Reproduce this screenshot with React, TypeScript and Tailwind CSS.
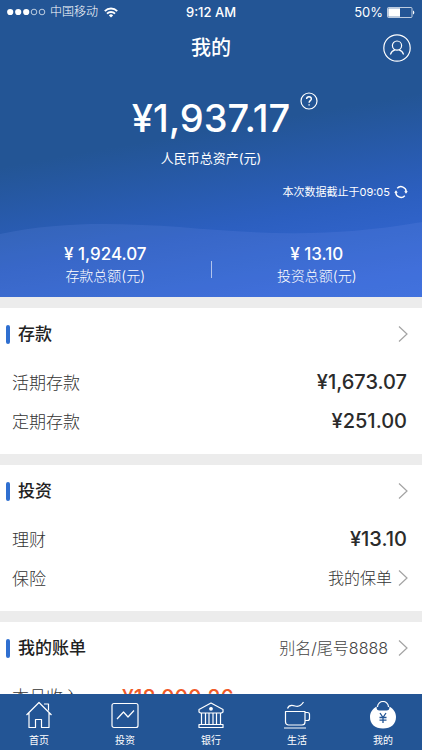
import React from "react";

function Chevron() {
  return (
    <svg width="10" height="18" viewBox="0 0 10 18" fill="none" stroke="#a3a3a3" strokeWidth="1.2" aria-hidden="true">
      <path d="M1 1.5 9 9l-8 7.5" />
    </svg>
  );
}

function StatusBar() {
  return (
    <div className="grid h-6 grid-cols-3 items-center px-[7px] text-[13px] leading-4">
      <div className="flex items-center whitespace-nowrap text-xs">
        <svg width="39" height="8" viewBox="0 0 39 8" aria-hidden="true">
          <g fill="#fff">
            <circle cx="3.2" cy="4" r="3.1" />
            <circle cx="11.2" cy="4" r="3.1" />
            <circle cx="19.2" cy="4" r="3.1" />
          </g>
          <g fill="none" stroke="#fff" strokeWidth=".7">
            <circle cx="27" cy="4" r="2.8" />
            <circle cx="35" cy="4" r="2.8" />
          </g>
        </svg>
        <span className="ml-1 font-light">中国移动</span>
        <svg className="ml-1.5" width="14" height="11" viewBox="0 0 14 11" fill="none" stroke="#fff" strokeWidth="1.9" aria-hidden="true">
          <path d="M.8 4.1a8.8 8.8 0 0 1 12.4 0M3 6.6a5.7 5.7 0 0 1 8 0" />
          <path d="M7 10.6 4.9 8.4a3 3 0 0 1 4.2 0Z" fill="#fff" stroke="none" />
        </svg>
      </div>
      <div className="text-center font-medium">9:12 AM</div>
      <div className="flex items-center justify-end gap-1">
        <span>50%</span>
        <svg width="28" height="11" viewBox="0 0 28 11" aria-hidden="true">
          <rect x=".5" y=".5" width="24.5" height="10" rx="1" fill="none" stroke="#fff" strokeWidth=".7" />
          <rect x="1.3" y="1.3" width="11.7" height="8.4" fill="#fff" />
          <path d="M26 3.5c1.8.6 1.8 3.4 0 4Z" fill="#fff" />
        </svg>
      </div>
    </div>
  );
}

function Stat({ label, amount }: { label: string; amount: string }) {
  return (
    <div className="flex flex-1 flex-col-reverse">
      <dt className="text-sm font-light leading-5">{label}</dt>
      <dd className="text-[17px] font-medium leading-6">{amount}</dd>
    </div>
  );
}

function Summary() {
  return (
    <header className="relative isolate shrink-0 bg-[linear-gradient(170deg,#235595_0%,#235595_45%,#2c5fc0_72%,#3568d6_92%,#386bdb_100%)] text-white">
      <svg className="absolute inset-x-0 bottom-0 -z-10 h-[75px] w-full" viewBox="0 0 422 75" preserveAspectRatio="none" aria-hidden="true">
        <path d="M0 12C60-1 120 1 180 5c80 7 150 11 242-5v75H0Z" fill="#7d9cf0" fillOpacity=".15" />
      </svg>
      <StatusBar />
      <div className="grid h-12 grid-cols-3 items-center px-[11px]">
        <h1 className="col-start-2 text-center text-xl font-medium leading-7">我的</h1>
        <button aria-label="个人资料" className="justify-self-end">
          <svg width="28" height="28" viewBox="0 0 28 28" fill="none" stroke="#fff" strokeWidth="1.2" aria-hidden="true">
            <circle cx="14" cy="14" r="13.2" />
            <circle cx="14" cy="11.6" r="4.6" />
            <path d="M7.4 20.5c.7-2.2 2.4-4 4.5-4.6m4.2 0c2.1.6 3.8 2.4 4.5 4.6" />
          </svg>
        </button>
      </div>
      <div className="flex justify-center pt-6">
        <div className="relative">
          <p className="text-[38px] font-medium leading-[44px]">¥1,937.17</p>
          <button aria-label="资产说明" className="absolute -top-1 left-full ml-2.5">
            <svg width="18" height="18" viewBox="0 0 18 18" fill="none" stroke="#fff" strokeWidth="1.2" aria-hidden="true">
              <circle cx="9" cy="9" r="8" />
              <path d="M6.6 7.1c0-1.5 1-2.4 2.4-2.4s2.4.9 2.4 2.2c0 1.6-2.3 1.9-2.3 3.8M9.1 12.2v1.4" strokeWidth="1.4" />
            </svg>
          </button>
        </div>
      </div>
      <p className="mt-2 text-center text-[13px] leading-5">人民币总资产(元)</p>
      <div className="mt-3 flex h-6 items-center justify-end gap-1 px-3.5 text-[11px]">
        <span>本次数据截止于09:05</span>
        <button aria-label="刷新">
          <svg width="14" height="14" viewBox="0 0 14 14" fill="none" stroke="#fff" strokeWidth="1.4" aria-hidden="true">
            <path d="M3.2 3.3A5.2 5.2 0 0 1 12.2 7M10.8 10.7A5.2 5.2 0 0 1 1.8 7" />
            <path d="M10.2 6.2h3.6L12 8.8ZM.2 7.8h3.6L2 5.2Z" fill="#fff" stroke="none" />
          </svg>
        </button>
      </div>
      <dl className="flex items-center pb-[11px] pt-[38px] text-center">
        <Stat label="存款总额(元)" amount="¥ 1,924.07" />
        <div role="presentation" className="mt-2.5 h-[17px] w-px bg-white/60" />
        <Stat label="投资总额(元)" amount="¥ 13.10" />
      </dl>
    </header>
  );
}

type SectionProps = { title: string; note?: string; children: React.ReactNode };

function Section({ title, note, children }: SectionProps) {
  return (
    <section className="shrink-0 bg-white pb-3">
      <a href="#detail" className="flex h-[52px] items-center pl-1.5 pr-3.5">
        <span className="h-[19px] w-1 rounded-xs bg-[#2f6fd0]" />
        <h2 className="ml-2 flex-1 text-[17px] font-medium leading-6 text-[#222]">{title}</h2>
        {note && <span className="mr-2.5 text-base font-light text-[#444]">{note}</span>}
        <Chevron />
      </a>
      <div className="pt-1">{children}</div>
    </section>
  );
}

function Row({ label, amount }: { label: string; amount: string }) {
  return (
    <div className="flex h-[39px] items-center justify-between pl-3 pr-[15px]">
      <span className="text-[17px] font-light text-[#333]">{label}</span>
      <span className="pb-1 text-xl font-medium leading-6 text-[#2b2b2b]">{amount}</span>
    </div>
  );
}

const tabs = [
  {
    label: "首页",
    icon: <path d="M1.5 14 14 1.5 26.5 14M4 12v14.5h6.5v-8h6v8H24V12M19 3h4.5v6.5" />,
  },
  {
    label: "投资",
    icon: (
      <>
        <rect x="1" y="2.5" width="26" height="24" rx="2" />
        <path d="m6 18 6.5-7 4.5 5 6-6.5" />
      </>
    ),
  },
  {
    label: "银行",
    icon: (
      <>
        <path d="M2 8.5 14 2l12 6.5V11l-1.5 1h-21L2 11ZM2 26.5h24v-3H2Z" />
        <path d="M4.5 12v11.5M8.5 12v11.5M12 12v11.5M16 12v11.5M19.5 12v11.5M23.5 12v11.5" />
        <circle cx="14" cy="7.8" r="1.3" fill="#fff" />
      </>
    ),
  },
  {
    label: "生活",
    icon: (
      <>
        <path d="M2.5 10.5H22V21a3 3 0 0 1-3 3H5.5a3 3 0 0 1-3-3ZM22 11.5h2.5a2 2 0 0 1 2 2v4a2 2 0 0 1-2 2H22M1 27h22" />
        <path d="M4.5 7.5C6 3.5 9 4 12 5s6 0 8.500-4" />
      </>
    ),
  },
  {
    label: "我的",
    icon: (
      <>
        <path d="M8.5 6a5.5 5.5 0 0 1 11 0" />
        <path d="M7.5 5.5c0 3 1 4 3 4h7c2 0 3-1 3-4 4 2.5 6.5 6 6.5 10.5 0 7-5 11.5-13 11.500S1 23 1 16C1 11.5 3.5 8 7.5 5.5Z" fill="#fff" stroke="none" />
        <path d="m11 12 3 4.500 3-4.500M10.500 16.500h7M10.500 19.200h7M14 16.500V22" stroke="#235595" strokeWidth="1.3" />
      </>
    ),
  },
];

function TabBar() {
  return (
    <nav className="flex h-14 shrink-0 justify-between bg-[#235595] px-[25px] pt-[7px] text-white">
      {tabs.map((tab) => (
        <a key={tab.label} href="#tab" className="flex w-7 flex-col items-center gap-1">
          <svg width="28" height="28" viewBox="0 0 28 28" fill="none" stroke="#fff" strokeWidth="1.2" strokeLinejoin="round" aria-hidden="true">
            {tab.icon}
          </svg>
          <span className="text-[10px] leading-[14px]">{tab.label}</span>
        </a>
      ))}
    </nav>
  );
}

export default function App() {
  return (
    <div className="flex h-dvh flex-col font-['Inter','Noto_Sans_CJK_SC',sans-serif]">
      <main className="flex min-h-0 flex-1 flex-col gap-[11px] overflow-y-auto bg-[#ececec] [scrollbar-width:none]">
        <Summary />
        <Section title="存款">
          <Row label="活期存款" amount="¥1,673.07" />
          <Row label="定期存款" amount="¥251.00" />
        </Section>
        <Section title="投资">
          <Row label="理财" amount="¥13.10" />
          <a href="#policy" className="flex h-[39px] items-center justify-between pl-3 pr-3.5 font-light text-[#333]">
            <span className="text-[17px]">保险</span>
            <span className="flex items-center gap-1.5 pb-1 text-base">
              我的保单
              <Chevron />
            </span>
          </a>
        </Section>
        <Section title="我的账单" note="别名/尾号8888">
          <div className="flex h-[39px] items-center gap-[42px] pl-3">
            <span className="text-[17px] font-light text-[#333]">本月收入</span>
            <span className="text-[21px] font-medium text-[#f05a28]">¥18,000.26</span>
          </div>
        </Section>
      </main>
      <TabBar />
    </div>
  );
}
